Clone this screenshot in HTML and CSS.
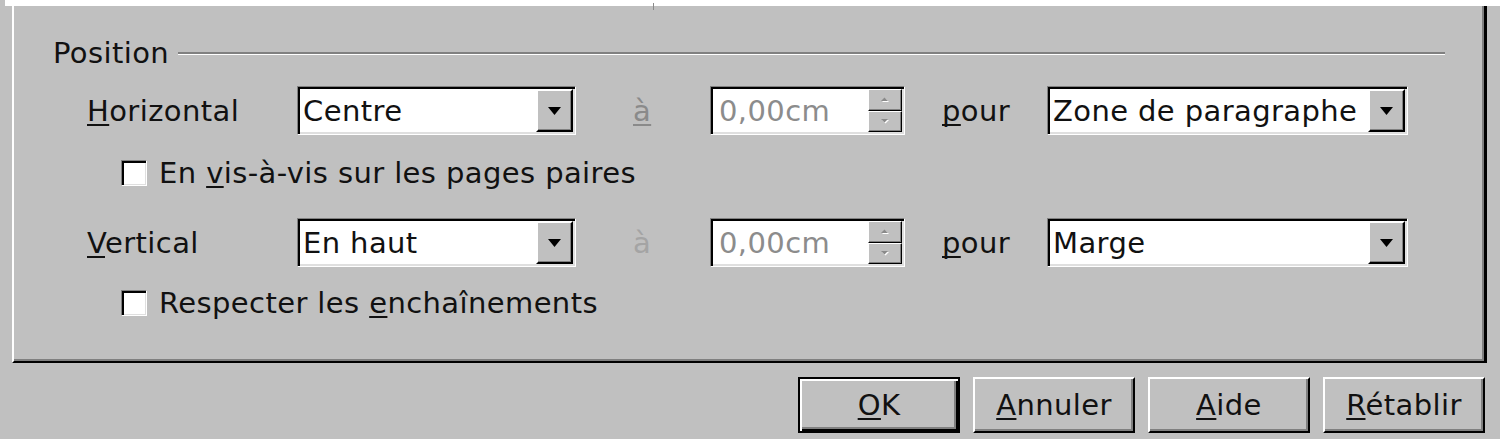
FILE: index.html
```html
<!DOCTYPE html>
<html lang="fr">
<head>
<meta charset="utf-8">
<title>Position</title>
<link rel="stylesheet" href="styles.css">
</head>
<body>
<div class="tabstrip"><span class="tick"></span></div>
<div class="tabpage">
  <div class="group">
    <div class="legend"><span class="legend-text">Position</span><span class="rule"></span></div>

    <div class="row">
      <span class="lbl"><u>H</u>orizontal</span>
      <div class="combo combo-pos">
        <span class="val">Centre</span>
        <span class="drop"><svg width="13" height="8" viewBox="0 0 13 8"><path d="M0 0H13L6.5 8Z" fill="#000"/></svg></span>
      </div>
      <span class="at at-1"><u>à</u></span>
      <div class="combo spin">
        <span class="val val-dis">0,00cm</span>
        <span class="spinbtns">
          <span class="sb"><svg width="8" height="5" viewBox="0 0 8 5"><path d="M1 5H8L4.5 1.5Z" fill="#fff"/><path d="M0 4H7L3.5 0.5Z" fill="#8a8a8a"/></svg></span>
          <span class="sb"><svg width="8" height="5" viewBox="0 0 8 5"><path d="M1 1H8L4.5 4.5Z" fill="#fff"/><path d="M0 0H7L3.5 3.5Z" fill="#8a8a8a"/></svg></span>
        </span>
      </div>
      <span class="pour"><u>p</u>our</span>
      <div class="combo combo-rel">
        <span class="val">Zone de paragraphe</span>
        <span class="drop"><svg width="13" height="8" viewBox="0 0 13 8"><path d="M0 0H13L6.5 8Z" fill="#000"/></svg></span>
      </div>
    </div>

    <div class="check check-1">
      <span class="box"></span>
      <span class="check-text">En <u>v</u>is-à-vis sur les pages paires</span>
    </div>

    <div class="row row-2">
      <span class="lbl"><u>V</u>ertical</span>
      <div class="combo combo-pos">
        <span class="val">En haut</span>
        <span class="drop"><svg width="13" height="8" viewBox="0 0 13 8"><path d="M0 0H13L6.5 8Z" fill="#000"/></svg></span>
      </div>
      <span class="at at-2">à</span>
      <div class="combo spin">
        <span class="val val-dis">0,00cm</span>
        <span class="spinbtns">
          <span class="sb"><svg width="8" height="5" viewBox="0 0 8 5"><path d="M1 5H8L4.5 1.5Z" fill="#fff"/><path d="M0 4H7L3.5 0.5Z" fill="#8a8a8a"/></svg></span>
          <span class="sb"><svg width="8" height="5" viewBox="0 0 8 5"><path d="M1 1H8L4.5 4.5Z" fill="#fff"/><path d="M0 0H7L3.5 3.5Z" fill="#8a8a8a"/></svg></span>
        </span>
      </div>
      <span class="pour"><u>p</u>our</span>
      <div class="combo combo-rel">
        <span class="val">Marge</span>
        <span class="drop"><svg width="13" height="8" viewBox="0 0 13 8"><path d="M0 0H13L6.5 8Z" fill="#000"/></svg></span>
      </div>
    </div>

    <div class="check check-2">
      <span class="box"></span>
      <span class="check-text">Respecter les <u>e</u>nchaînements</span>
    </div>
  </div>
</div>
<div class="buttons">
  <button class="btn btn-default" type="button"><u>O</u>K</button>
  <button class="btn" type="button"><u>A</u>nnuler</button>
  <button class="btn" type="button"><u>A</u>ide</button>
  <button class="btn" type="button"><u>R</u>établir</button>
</div>
</body>
</html>
```

FILE: styles.css
```css
html, body {
  margin: 0;
  height: 100%;
}

body {
  background: #c0c0c0;
  font-family: "DejaVu Sans", "Noto Sans", sans-serif;
  font-size: 29px;
  letter-spacing: 0.4px;
  color: #111;
  overflow: hidden;
}

u {
  text-decoration-thickness: 2px;
  text-underline-offset: 3px;
  text-decoration-skip-ink: none;
}

.tabstrip {
  position: relative;
  height: 6px;
  margin-left: 5px;
  background: #fff;
}

.tick {
  position: absolute;
  left: 648px;
  top: 3px;
  width: 1px;
  height: 7px;
  background: #8a8a8a;
}

.tabpage {
  box-sizing: border-box;
  margin-left: 12px;
  width: 1475px;
  height: 357px;
  padding-top: 30px;
  border-left: 2px solid #fff;
  border-right: 3px solid #000;
  border-bottom: 2px solid #000;
  box-shadow: inset -2px -2px 0 #808080;
}

.group {
  padding-left: 39px;
  padding-right: 39px;
}

.legend {
  display: flex;
  align-items: center;
  gap: 9px;
  height: 34px;
  line-height: 34px;
}

.rule {
  flex: 1;
  height: 2px;
  background: #808080;
  border-bottom: 1px solid #fff;
}

.row {
  display: flex;
  align-items: center;
  height: 49px;
  margin-top: 16px;
  padding-left: 34px;
}

.row-2 {
  margin-top: 32px;
}

.lbl {
  width: 210px;
  flex: none;
}

.combo {
  box-sizing: border-box;
  display: flex;
  flex: none;
  height: 49px;
  background: #fff;
  border: 1px solid;
  border-color: #808080 #fff #fff #808080;
  padding: 2px;
  box-shadow: inset 2px 2px 0 #000, inset -2px -2px 0 #dfdfdf;
}

.combo-pos {
  width: 279px;
}

.combo-rel {
  width: 361px;
}

.spin {
  width: 195px;
}

.val {
  flex: 1;
  display: flex;
  align-items: center;
  padding-left: 3px;
  white-space: nowrap;
  overflow: hidden;
}

.spin .val {
  padding-left: 6px;
}

.val-dis {
  color: #8c8c8c;
}

.drop {
  box-sizing: border-box;
  flex: none;
  width: 37px;
  display: flex;
  align-items: center;
  justify-content: center;
  background: #c0c0c0;
  border: 2px solid;
  border-color: #fff #000 #000 #fff;
  box-shadow: inset -1px -1px 0 #808080;
}

.spinbtns {
  flex: none;
  width: 34px;
  display: flex;
  flex-direction: column;
}

.sb {
  box-sizing: border-box;
  flex: 1;
  display: flex;
  align-items: center;
  justify-content: center;
  background: #c0c0c0;
  border: 1px solid;
  border-color: #fff #000 #000 #fff;
  box-shadow: inset -1px -1px 0 #808080;
}

.at {
  flex: none;
  width: 77px;
  margin-left: 57px;
}

.at-1 {
  color: #8a8a8a;
}

.at-2 {
  color: #a4a4a4;
}

.pour {
  flex: none;
  width: 105px;
  margin-left: 37px;
}

.check {
  display: flex;
  align-items: center;
  height: 26px;
  padding-left: 68px;
}

.check-1 {
  margin-top: 25px;
}

.check-2 {
  margin-top: 23px;
}

.box {
  box-sizing: border-box;
  flex: none;
  width: 26px;
  height: 26px;
  background: #fff;
  border: 1px solid;
  border-color: #808080 #fff #fff #808080;
  box-shadow: inset 2px 2px 0 #000, inset -1px -1px 0 #dfdfdf;
}

.check-text {
  margin-left: 12px;
  white-space: nowrap;
}

.buttons {
  display: flex;
  justify-content: flex-end;
  gap: 13px;
  margin-top: 14px;
  padding-right: 15px;
}

.btn {
  box-sizing: border-box;
  width: 162px;
  height: 56px;
  padding: 0;
  font: inherit;
  letter-spacing: inherit;
  color: #111;
  background: #c0c0c0;
  border: 2px solid;
  border-color: #fff #000 #000 #fff;
  box-shadow: inset -2px -2px 0 #808080;
}

.btn-default {
  border-color: #000;
  box-shadow: inset 2px 2px 0 #fff, inset -2px -2px 0 #000, inset -4px -4px 0 #808080;
}
```
